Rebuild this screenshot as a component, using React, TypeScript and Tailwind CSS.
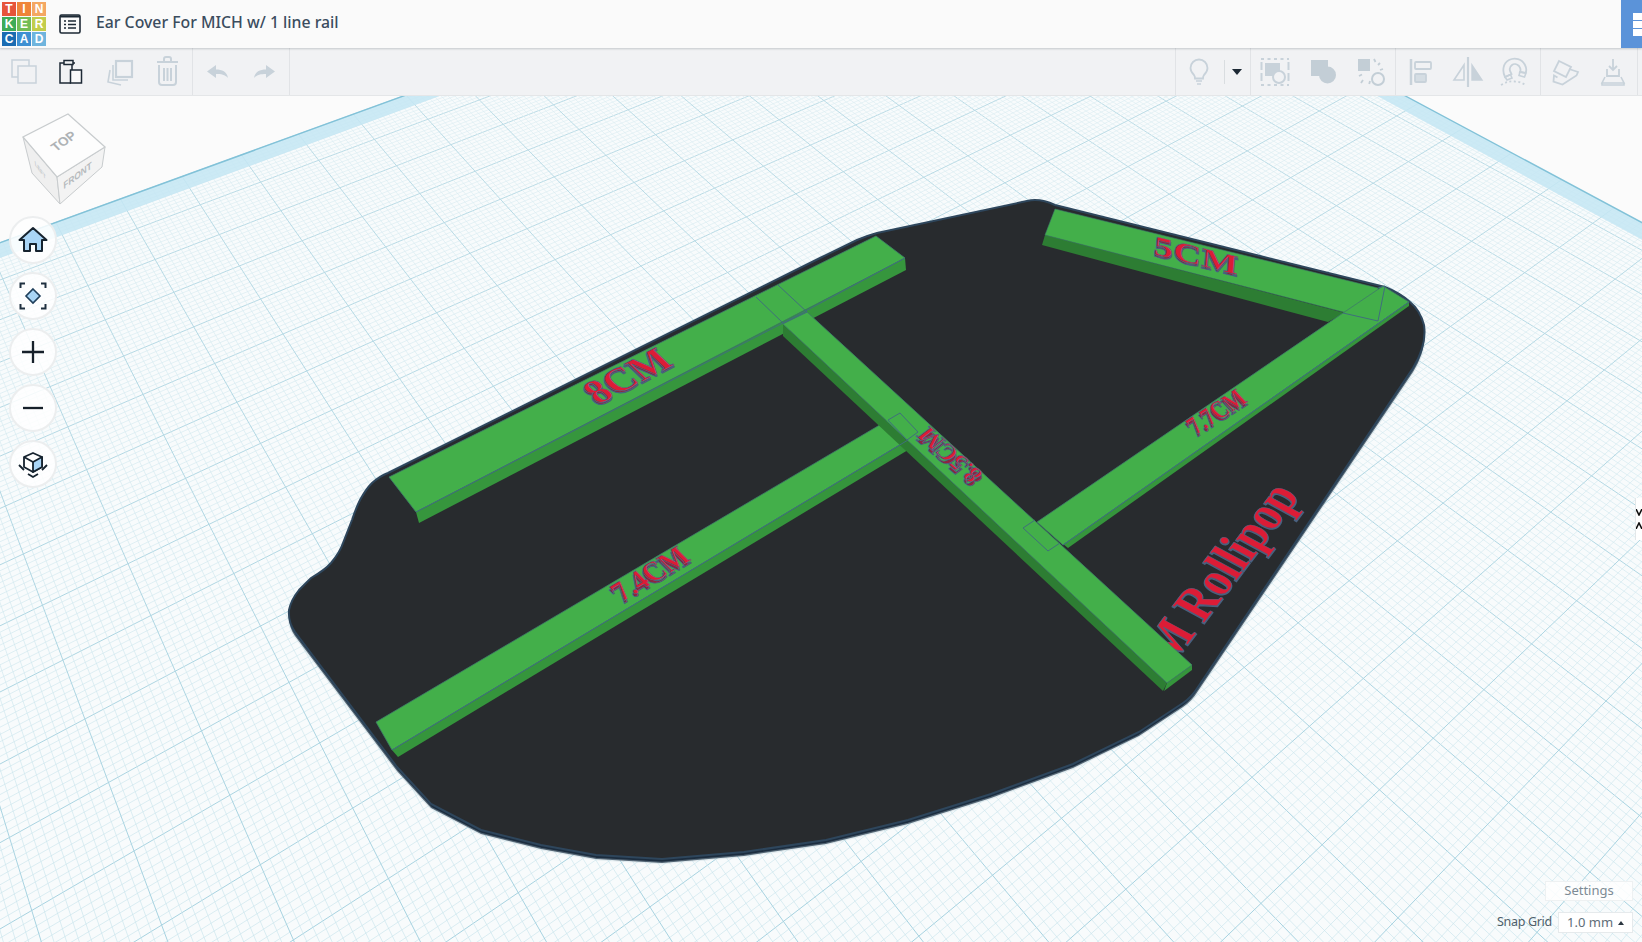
import React from "react";

const VA = [3142, -900];
const VB = [-534, -942];
const O = [1000, -121];
const A = -0.0148;
const B = -0.01787;
const UP = 0.67;
const VP = 0.0;

function P(u: number, v: number): [number, number] {
  const t = u * A;
  const s = v * B;
  const d = 1 + t + s;
  return [(O[0] + t * VA[0] + s * VB[0]) / d, (O[1] + t * VA[1] + s * VB[1]) / d];
}
const pts = (a: [number, number][]) => a.map((p) => p[0].toFixed(1) + "," + p[1].toFixed(1)).join(" ");

function Grid() {
  const MAX = 26;
  const els: React.ReactNode[] = [];
  for (let i = -10; i < 260; i++) {
    const u = UP + i / 10;
    if (u >= 0 && u <= MAX) {
      const a = P(u, 0);
      const b = P(u, MAX);
      const mj = i % 10 === 0;
      els.push(<line key={"u" + i} x1={a[0]} y1={a[1]} x2={b[0]} y2={b[1]} stroke={mj ? "url(#gmaj)" : "url(#gfine)"} strokeWidth={mj ? 1 : 0.65} />);
    }
    const v = VP + i / 10;
    if (v >= 0 && v <= MAX) {
      const a = P(0, v);
      const b = P(MAX, v);
      const mj = i % 10 === 0;
      els.push(<line key={"v" + i} x1={a[0]} y1={a[1]} x2={b[0]} y2={b[1]} stroke={mj ? "url(#gmaj)" : "url(#gfine)"} strokeWidth={mj ? 1 : 0.65} />);
    }
  }
  return <g>{els}</g>;
}

const TOP_FACE =
  "M1027 201 Q1040 198 1055 205 L1385 287 Q1400 293 1410 302 Q1420 310 1424 325 Q1427 345 1413 368 L1198 687 Q1192 697 1183 703 L1139 732 L1073 764 L991 794 L908 820 L826 840 L744 852 L662 859 L596 855 L541 845 L481 830 L431 804 L397 767 L295 632 Q288 622 289 610 Q291 600 299 590 L311 578 Q325 570 331 563 Q340 552 343 543 L352 520 Q356 508 360 500 Q366 489 372 483 Q380 476 388 473 L820 258 L857 240 Q866 236 877 233 Z";

function RailText({ m, t, ex = 3, sw = 0.4 }: { m: string; t: string; ex?: number; sw?: number }) {
  const cls = "font-['Liberation_Serif',serif] font-bold text-[20px]";
  return (
    <g>
      <text transform={`translate(0 ${ex}) ${m}`} className={cls} fill="#8f2440" stroke="#47617f" strokeWidth={0.7}>{t}</text>
      <text transform={m} className={cls} fill="#dc1c36" stroke="#4f6583" strokeWidth={sw}>{t}</text>
    </g>
  );
}

const WIRE = "#3f6f7c";

function Scene() {
  return (
    <svg className="absolute inset-0 w-full h-full" viewBox="0 0 1642 942" width={1642} height={942}>
      <defs>
        <linearGradient id="gfine" gradientUnits="userSpaceOnUse" x1="0" y1="90" x2="0" y2="942">
          <stop offset="0" stopColor="#dcedf2" />
          <stop offset="1" stopColor="#c8e4ec" />
        </linearGradient>
        <linearGradient id="gmaj" gradientUnits="userSpaceOnUse" x1="0" y1="90" x2="0" y2="942">
          <stop offset="0" stopColor="#bcdce6" />
          <stop offset="1" stopColor="#a6d2e0" />
        </linearGradient>
      </defs>
      <rect x="0" y="0" width="1642" height="942" fill="#fbfbfb" />
      <polygon points={pts([P(0, 0), P(28, 0), P(28, 28), P(0, 28)])} fill="#f8fbfc" />
      <Grid />
      <polygon points={pts([P(0, 0), P(28, 0), P(28, 0.42), P(0, 0.42)])} fill="#c4e6f3" fillOpacity={0.85} />
      <polygon points={pts([P(0, 0), P(0.42, 0), P(0.42, 28), P(0, 28)])} fill="#c4e6f3" fillOpacity={0.85} />
      <polyline points={pts([P(28, 0), P(0, 0), P(0, 28)])} fill="none" stroke="#82c2d8" strokeWidth={1.5} />

      <path d={TOP_FACE} transform="translate(0 4)" fill="#1c2d3f" stroke="#b9cdd6" strokeOpacity={0.35} strokeWidth={2.5} />
      <path d={TOP_FACE} fill="#282b2e" stroke="#2e465c" strokeWidth={2} />

      <RailText m="matrix(1.32 -1.74 2.4 1.3 1172 665)" t="M Rollipop" ex={1} sw={0.2} />

      {/* 8CM rail */}
      <polygon points="416,512 905,258 906,270 419,523" fill="#36963d" />
      <polygon points="389,477 876,236 905,258 416,512" fill="#43af4a" stroke="#3d7a6a" strokeWidth={0.8} />
      {/* 7.4CM rail */}
      <polygon points="392,750 908,440 908,450 398,757" fill="#35953c" />
      <polygon points="376,722 900,413 908,440 392,750" fill="#43af4a" stroke="#3d7a6a" strokeWidth={0.8} />
      {/* 5CM rail */}
      <polygon points="1045,235 1345,313 1328,322 1042,245" fill="#2d7d33" />
      <polygon points="1055,209 1378,288 1378,321 1045,235" fill="#43af4a" stroke="#3d7a6a" strokeWidth={0.6} />
      {/* 7.7CM rail */}
      <polygon points="1063,544 1409,302 1409,306 1068,548" fill="#35953c" />
      <polygon points="1037,522 1343,313 1383,286 1409,302 1063,545" fill="#43af4a" stroke="#3d7a6a" strokeWidth={0.8} />
      {/* centre rail */}
      <polygon points="783,324 1167,683 1163,691 783,336" fill="#2d7d33" />
      <polygon points="1167,683 1192,665 1192,670 1164,691" fill="#35953c" />
      <polygon points="783,324 807,312 1192,665 1167,683" fill="#43af4a" stroke="#3d7a6a" strokeWidth={0.8} />

      <g fill="none" stroke={WIRE} strokeWidth={1}>
        <polyline points="416,512 783,323 905,258" />
        <polyline points="392,750 908,440" />
        <polyline points="756,297 783,323 807,312 778,285" />
        <polyline points="888,420 900,413 918,432 907,440 888,420" />
        <polyline points="1035,520 1023,528 1048,551 1060,543" />
        <polyline points="1343,313 1378,321 1385,286 1378,288" />
        <polyline points="1063,545 1409,302" />
      </g>

      <RailText m="matrix(1.78 -0.94 1.4 1.35 598 405)" t="8CM" ex={2} />
      <RailText m="matrix(1.95 0.48 -0.1 1.35 1153 254)" t="5CM" ex={2} />
      <RailText m="matrix(0.9 -0.58 0.92 1 1196 435)" t="7.7CM" ex={3} />
      <RailText m="matrix(1.2 -0.73 1.08 1.08 622 602)" t="7.4CM" ex={3} />
      <RailText m="matrix(-0.95 -0.83 1 -0.77 984 474)" t="8.5CM" ex={4} sw={0.7} />

      {/* view cube */}
      <polygon points="23,137 57,177 60,204 32,173" fill="#efefef" stroke="#c8ccce" strokeWidth={1} />
      <polygon points="57,177 105,147 102,167 60,204" fill="#f3f3f3" stroke="#c8ccce" strokeWidth={1} />
      <polygon points="68,114 105,147 57,177 23,137" fill="#fdfdfd" stroke="#c8ccce" strokeWidth={1.2} />
      <text transform="matrix(0.82 -0.57 0.7 0.72 56 152)" className="font-['Liberation_Sans',sans-serif] font-bold text-[13px]" fill="#aeb2b5">TOP</text>
      <text transform="matrix(0.82 -0.62 0.2 0.85 64 189)" className="font-['Liberation_Sans',sans-serif] italic font-bold text-[10px]" fill="#b6babd">FRONT</text>
      <text transform="matrix(0.55 0.75 0.1 0.85 35 165)" className="font-['Liberation_Sans',sans-serif] font-bold text-[8px]" fill="#c2c6c9">LEFT</text>
    </svg>
  );
}

const G = "#c8d2da";
const K = "#1d2935";

function Btn({ children }: { children: React.ReactNode }) {
  return (
    <div className="w-[48px] h-[48px] flex-none">
      <svg viewBox="0 0 48 48" width={48} height={48} fill="none">{children}</svg>
    </div>
  );
}

function Group({ children, border = true, w }: { children: React.ReactNode; border?: boolean; w?: string }) {
  return <div className={`flex h-full ${border ? "border-r border-[#e1e3e6]" : ""} ${w ?? ""}`}>{children}</div>;
}

function Logo() {
  const cells: [string, string][] = [
    ["T", "#e6543a"], ["I", "#ef8438"], ["N", "#f4a762"],
    ["K", "#3dab58"], ["E", "#74bd55"], ["R", "#c2cd4b"],
    ["C", "#1b6cb2"], ["A", "#3f90d2"], ["D", "#6fb4dd"],
  ];
  return (
    <div className="grid grid-cols-3 gap-[1px] w-[44px] h-[44px] ml-[2px] flex-none">
      {cells.map(([l, c]) => (
        <div key={l} style={{ backgroundColor: c }} className="flex items-center justify-center text-white font-bold text-[12px] leading-none font-['Liberation_Sans',sans-serif]">{l}</div>
      ))}
    </div>
  );
}

function RoundBtn({ children }: { children: React.ReactNode }) {
  return (
    <div className="w-[48px] h-[48px] rounded-full bg-white/85 border-2 border-[#eceeef] flex items-center justify-center">
      <svg viewBox="0 0 32 32" width={32} height={32} fill="none">{children}</svg>
    </div>
  );
}

export default function App() {
  return (
    <div className="relative w-[1642px] h-[942px] overflow-hidden bg-[#fbfbfb] font-['Noto_Sans',sans-serif]">
      <Scene />

      <header className="relative h-[48px] bg-[#fafafa] flex items-center shadow-[0_1px_2px_rgba(60,70,80,0.25)] z-10">
        <Logo />
        <svg className="ml-[13px] flex-none" viewBox="0 0 22 20" width={22} height={20} fill="none">
          <rect x="1" y="1" width="20" height="18" rx="1.5" stroke={K} strokeWidth="1.6" />
          <path d="M1 2.5h20" stroke={K} strokeWidth="2" />
          <path d="M5 7h2M9 7h8M5 10.5h2M9 10.5h8M5 14h2M9 14h8" stroke={K} strokeWidth="1.7" />
        </svg>
        <h1 className="ml-[15px] mb-[3px] text-[15.8px] font-medium text-[#3b4c5e] whitespace-nowrap">Ear Cover For MICH w/ 1 line rail</h1>
        <div className="ml-auto w-[21px] h-[48px] bg-[#5b93d9] flex flex-col items-end justify-center gap-[1px]">
          <div className="w-[9px] h-[7px] bg-white" />
          <div className="w-[9px] h-[7px] bg-white" />
          <div className="w-[9px] h-[7px] bg-white" />
        </div>
      </header>

      <div className="relative h-[48px] bg-[#f1f2f4] border-b border-[#e4e6e8] flex items-stretch justify-between">
        <div className="flex">
          <Group>
            <Btn>
              <path d="M29 18V12H12v17h6" stroke={G} strokeWidth="1.5" />
              <rect x="18" y="18" width="18" height="17" stroke={G} strokeWidth="1.5" />
            </Btn>
            <Btn>
              <path d="M18 15h-6v20h11" stroke={K} strokeWidth="1.5" />
              <path d="M27 15h-3v7" stroke={K} strokeWidth="1.5" />
              <rect x="16" y="12.5" width="9" height="4" stroke={K} strokeWidth="1.5" fill="#f1f2f4" />
              <rect x="22.5" y="22" width="11" height="13" stroke={K} strokeWidth="1.5" fill="#fafafa" />
            </Btn>
            <Btn>
              <rect x="20" y="13" width="16" height="16" stroke={G} strokeWidth="2.2" />
              <path d="M17 17v15h15M14 22l-2 12 13 3" stroke={G} strokeWidth="1.6" />
            </Btn>
            <Btn>
              <path d="M13 14h21M20 14v-3c0-1 1-2 2-2h3c1 0 2 1 2 2v3" stroke={G} strokeWidth="2" />
              <path d="M15 17v17c0 2 1 3 3 3h11c2 0 3-1 3-3V17" stroke={G} strokeWidth="2" />
              <path d="M20 20v13M23.5 20v13M27 20v13" stroke={G} strokeWidth="2" />
            </Btn>
          </Group>
          <Group>
            <Btn>
              <path d="M14 23.5 23 17v4.5c6 0 11 2 12 8.5-3-3.5-7-4-12-4V30Z" fill={G} />
            </Btn>
            <Btn>
              <path d="M35 23.5 26 17v4.5c-6 0-11 2-12 8.5 3-3.5 7-4 12-4V30Z" fill={G} transform="translate(-1 0)" />
            </Btn>
          </Group>
        </div>
        <div className="flex pr-[4px]">
          <Group w="border-l border-[#e1e3e6]">
            <Btn>
              <path d="M18 27c-2-2-3.500-4-3.500-7a8.500 8.500 0 0 1 17 0c0 3-1.500 5-3.500 7-.8 1-1 2-1 3.500h-8c0-1.500-.2-2.500-1-3.500Z" stroke={G} strokeWidth="1.8" />
              <path d="M20 33h6M21 36h4" stroke={G} strokeWidth="1.6" />
            </Btn>
            <div className="w-[26px] flex items-center justify-start relative">
              <div className="absolute left-0 top-[12px] h-[24px] w-px bg-[#d9dde0]" />
              <svg className="ml-[8px]" viewBox="0 0 10 6" width={10} height={6}><path d="M0 0h10L5 6Z" fill={K} /></svg>
            </div>
          </Group>
          <Group>
            <Btn>
              <path d="M10 11h28M10 37h28" stroke={G} strokeWidth="2" strokeDasharray="3 3.500" />
              <path d="M10.500 14v20M37.500 14v20" stroke={G} strokeWidth="2" strokeDasharray="8 3" />
              <rect x="14" y="15" width="15" height="13" fill={G} />
              <circle cx="28" cy="29" r="6" stroke={G} strokeWidth="2" fill="#f1f2f4" />
            </Btn>
            <Btn>
              <rect x="12" y="12" width="17" height="16" fill="#c3ced6" />
              <circle cx="28.500" cy="27" r="8.500" fill="#c3ced6" />
            </Btn>
            <Btn>
              <rect x="11" y="11" width="12" height="12" fill="#c3ced6" />
              <circle cx="31" cy="31" r="6" stroke="#c3ced6" strokeWidth="2" />
              <path d="M27 11l1.500 3M33 15l-2 2M12 28l3-1.500M14 35l2-3M23 33l-.8 3M36 21l-3 1" stroke="#c3ced6" strokeWidth="1.8" />
            </Btn>
          </Group>
          <Group>
            <Btn>
              <path d="M15 11v26" stroke={G} strokeWidth="2.5" />
              <rect x="19" y="14" width="16" height="7" rx="1" stroke={G} strokeWidth="1.8" />
              <rect x="19" y="26" width="11" height="8" rx="1" stroke={G} strokeWidth="1.8" fill="#d5dde3" />
            </Btn>
            <Btn>
              <path d="M24 9v30" stroke={G} strokeWidth="2.2" />
              <path d="M20 17v15h-10Z" stroke={G} strokeWidth="1.6" />
              <path d="M28 17v15h10Z" fill={G} stroke={G} strokeWidth="1.4" />
            </Btn>
            <Btn>
              <g transform="translate(-2 0)">
                <path d="M15 29c-3-6-2-14 4-17 6-3 13-1 16 5 1.500 3 1.500 6 .5 8l-5.500-1c1-2 .5-4-1-6-2-2-5-2.500-7-1-2 1.500-3 4-1.500 7l1 2Z" stroke={G} strokeWidth="1.8" />
                <path d="M15 29l5.500-2.500 1.500 3.500-5 2ZM36 25l-6-1-1 3.500 5.500 1.500Z" stroke={G} strokeWidth="1.6" />
                <path d="M11 37c5-3 9-4 14-3.500 4 .3 8 1.500 11 4" stroke={G} strokeWidth="1.8" strokeDasharray="2 2.500" />
              </g>
            </Btn>
          </Group>
          <Group>
            <Btn>
              <path d="M18 13l12 6-5 10-12-6Z" stroke={G} strokeWidth="1.8" />
              <path d="M28 21l9 3-1.500 3.500-14 9-9-3 .5-6 3.500 2" stroke={G} strokeWidth="1.8" />
            </Btn>
            <Btn>
              <path d="M24 11v11M20 18l4 4 4-4" stroke={G} strokeWidth="1.8" />
              <path d="M18 21v7h12v-7" stroke={G} strokeWidth="1.8" />
              <path d="M16 29l-3 6h22l-3-6M13 35h22v2H13Z" stroke={G} strokeWidth="1.6" />
            </Btn>
          </Group>
        </div>
      </div>

      <div className="absolute left-[9px] top-[216px] flex flex-col gap-[8px]">
        <RoundBtn>
          <path d="M2.500 16 16 4l13.500 12H25v11h-6v-7h-6v7H7V16Z" fill="#a9d5f6" stroke="#16232f" strokeWidth="2" strokeLinejoin="round" />
        </RoundBtn>
        <RoundBtn>
          <path d="m16 9 7 7-7 7-7-7Z" fill="#a9d5f6" stroke="#1f3f5b" strokeWidth="1.600" />
          <path d="M3.500 8V3.500H8M24 3.500h4.500V8M28.500 24v4.500H24M8 28.500H3.500V24" stroke="#1f3040" strokeWidth="2" />
        </RoundBtn>
        <RoundBtn>
          <path d="M16 5v22M5 16h22" stroke="#16202a" strokeWidth="2.300" />
        </RoundBtn>
        <RoundBtn>
          <path d="M6 16h20" stroke="#16202a" strokeWidth="2.300" />
        </RoundBtn>
        <RoundBtn>
          <path d="m16 5 9 4v10l-9 5-9-5V9Z" fill="#fff" stroke="#16232f" strokeWidth="1.800" strokeLinejoin="round" />
          <path d="M16 14v10l9-5V9Z" fill="#a9d5f6" stroke="#16232f" strokeWidth="1.800" strokeLinejoin="round" />
          <path d="m7 9 9 5" stroke="#16232f" strokeWidth="1.800" />
          <path d="M2 17l5 5M30 17l-5 5M11 26l5 3 5-3" stroke="#16232f" strokeWidth="1.800" />
        </RoundBtn>
      </div>

      <div className="absolute right-0 top-[498px] w-[7px] h-[42px] bg-white flex flex-col items-start justify-center gap-[6px] border-l border-[#e3e7e9]">
        <svg viewBox="0 0 7 7" width={7} height={7}><path d="M0 0l3 6 3-6" stroke="#111" strokeWidth="1.600" fill="none" /></svg>
        <svg viewBox="0 0 7 7" width={7} height={7}><path d="M0 7l3-6 3 6" stroke="#111" strokeWidth="1.600" fill="none" /></svg>
      </div>

      <div className="absolute left-[1545px] top-[881px] w-[88px] h-[20px] bg-white/80 border border-[#eef1f2] flex items-center justify-center text-[13px] text-[#7d8b95]">Settings</div>
      <div className="absolute left-[1497px] top-[912px] flex items-center gap-[8px]">
        <span className="w-[53px] whitespace-nowrap text-[12.5px] tracking-tight text-[#4f5f6b]">Snap Grid</span>
        <div className="w-[75px] h-[21px] bg-white border border-[#e6eaec] flex items-center justify-between pl-[8px] pr-[8px] text-[13px] text-[#5f6d78]">
          <span>1.0 mm</span>
          <svg viewBox="0 0 6 4" width={6} height={4}><path d="M0 4h6L3 0Z" fill="#2b3640" /></svg>
        </div>
      </div>
    </div>
  );
}
